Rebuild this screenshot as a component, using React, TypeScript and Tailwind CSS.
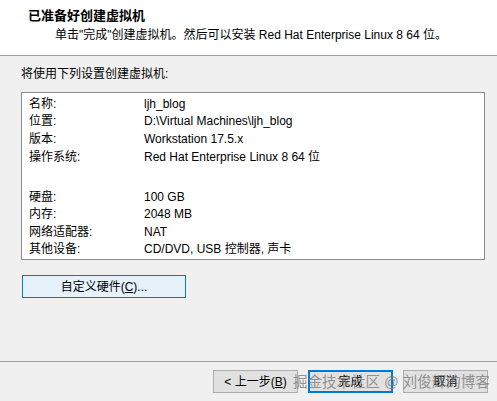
import React from 'react';

const rowsTop = [
  ['名称:', 'ljh_blog'],
  ['位置:', 'D:\\Virtual Machines\\ljh_blog'],
  ['版本:', 'Workstation 17.5.x'],
  ['操作系统:', 'Red Hat Enterprise Linux 8 64 位'],
];

const rowsBottom = [
  ['硬盘:', '100 GB'],
  ['内存:', '2048 MB'],
  ['网络适配器:', 'NAT'],
  ['其他设备:', 'CD/DVD, USB 控制器, 声卡'],
];

const font = { fontFamily: '"Liberation Sans", "Noto Sans CJK SC", sans-serif' };

function Row({ label, value }: { label: string; value: string }) {
  return (
    <div className="flex h-[17.6px] items-center leading-none">
      <span className="w-[115px]">{label}</span>
      <span>{value}</span>
    </div>
  );
}

export default function App() {
  return (
    <div className="relative w-[497px] h-[401px] bg-[#f0f0f0] text-[12px] text-black overflow-hidden" style={font}>
      <div className="h-[56px] bg-white border-b border-[#a0a0a0] pt-[9px]">
        <div className="pl-[28px] text-[13px] font-bold leading-[14px]">已准备好创建虚拟机</div>
        <div className="pl-[55px] mt-[5px] leading-[14px]">
          单击"完成"创建虚拟机。然后可以安装 Red Hat Enterprise Linux 8 64 位。
        </div>
      </div>

      <div className="px-[21px] pt-[11px]">
        <div className="leading-[14px]">将使用下列设置创建虚拟机:</div>
        <div className="mt-[11px] w-[464px] h-[168px] bg-white border border-[#8c8c8c] pl-[7px] pt-[2px]">
          {rowsTop.map(([l, v]) => (
            <Row key={l} label={l} value={v} />
          ))}
          <div className="h-[22.4px]" />
          {rowsBottom.map(([l, v]) => (
            <Row key={l} label={l} value={v} />
          ))}
        </div>
        <button className="mt-[15px] ml-[1px] w-[164px] h-[23px] bg-[#e5f1fb] border border-[#0078d7] flex items-center justify-center leading-none">
          自定义硬件(<span className="underline">C</span>)...
        </button>
      </div>

      <div className="absolute left-0 right-0 top-[361px] border-t border-[#a0a0a0]" />
      <div className="absolute top-[370px] right-[9px] flex gap-[10px]">
        <button className="w-[85px] h-[23px] bg-[#e1e1e1] border border-[#adadad] flex items-center justify-center leading-none">
          &lt; 上一步(<span className="underline">B</span>)
        </button>
        <button className="w-[85px] h-[23px] bg-[#e1e1e1] border-2 border-[#0078d7] flex items-center justify-center leading-none">
          完成
        </button>
        <button className="w-[85px] h-[23px] bg-[#e1e1e1] border border-[#adadad] flex items-center justify-center leading-none">
          取消
        </button>
      </div>

      <div className="absolute left-[293px] top-[373px] text-[14.5px] leading-[18px] text-[#7a7a7a]/80 whitespace-nowrap pointer-events-none">
        掘金技术社区 @ 刘俊辉的博客
      </div>
    </div>
  );
}
